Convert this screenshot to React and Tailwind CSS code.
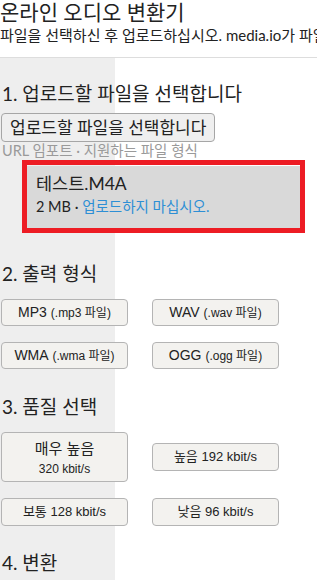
import React from 'react';

const kr = { fontFamily: 'Lato, "Noto Sans CJK KR", sans-serif' };
const arial = { fontFamily: '"Liberation Sans", "Noto Sans CJK KR", sans-serif' };

const FormatButton = ({ label, ext }) => (
  <button
    className="w-[127px] h-[27px] bg-[#f3f2ef] border border-[#b4b4b4] rounded-[4px] text-[14px] text-[#222] flex items-center justify-center"
    style={arial}
  >
    {label}&nbsp;<span className="text-[12px]">{ext}</span>
  </button>
);

const QualityButton = ({ children, tall }) => (
  <button
    className={
      tall
        ? 'w-[127px] h-[50px] bg-[#f3f2ef] border border-[#b4b4b4] rounded-[4px] text-[#222] flex flex-col items-center justify-center'
        : 'w-[127px] h-[28px] bg-[#f3f2ef] border border-[#b4b4b4] rounded-[4px] text-[13px] text-[#222] flex items-center justify-center'
    }
    style={arial}
  >
    {children}
  </button>
);

export default function App() {
  return (
    <div className="w-[317px] h-[580px] overflow-hidden bg-white" style={kr}>
      {/* 헤더 */}
      <div className="h-[58px] border-b border-[#dddddd] text-[#222]">
        <h1 className="text-[21px] leading-[24px] whitespace-nowrap">온라인 오디오 변환기</h1>
        <p className="mt-[2px] text-[15px] leading-[18px] whitespace-nowrap">
          파일을 선택하신 후 업로드하십시오. media.io가 파일을 변환합니다.
        </p>
      </div>

      {/* 본문 - 왼쪽 회색 기둥 */}
      <div className="h-[522px] pl-[1px] bg-[linear-gradient(to_right,#eeeeee_115px,#ffffff_115px)] text-[#222]">
        <h2 className="pt-[24px] pl-[1px] text-[19px] leading-[24px] whitespace-nowrap">1. 업로드할 파일을 선택합니다</h2>
        <button className="mt-[7px] h-[29px] px-[8px] bg-[#efefef] border border-[#a6a6a6] rounded-[4px] text-[17px] leading-[19px] whitespace-nowrap">
          업로드할 파일을 선택합니다
        </button>
        <p className="pl-[1px] text-[14.5px] leading-[18px] text-[#9a9a9a] whitespace-nowrap">URL 임포트 · 지원하는 파일 형식</p>

        <div className="ml-[21px] w-[283px] h-[73px] border-[5px] border-[#ed1c24]">
          <div className="mt-[1px] h-[62px] bg-[#d9d9d9] pl-[9px] pt-[7px]">
            <div className="text-[17.5px] leading-[22px]">테스트.M4A</div>
            <div className="mt-[2px] text-[14.5px] leading-[20px] whitespace-nowrap">
              2 MB · <span className="text-[#2d8fd5]">업로드하지 마십시오.</span>
            </div>
          </div>
        </div>

        <h2 className="mt-[29px] pl-[1px] text-[19px] leading-[24px]">2. 출력 형식</h2>
        <div className="mt-[13px] flex gap-[24px]">
          <FormatButton label="MP3" ext="(.mp3 파일)" />
          <FormatButton label="WAV" ext="(.wav 파일)" />
        </div>
        <div className="mt-[16px] flex gap-[24px]">
          <FormatButton label="WMA" ext="(.wma 파일)" />
          <FormatButton label="OGG" ext="(.ogg 파일)" />
        </div>

        <h2 className="mt-[26px] pl-[1px] text-[19px] leading-[24px]">3. 품질 선택</h2>
        <div className="mt-[13px] flex items-center gap-[24px]">
          <QualityButton tall>
            <span className="text-[15px] leading-[20px]">매우 높음</span>
            <span className="mt-[3px] text-[12px] leading-[14px]">320 kbit/s</span>
          </QualityButton>
          <QualityButton>높음 192 kbit/s</QualityButton>
        </div>
        <div className="mt-[16px] flex gap-[24px]">
          <QualityButton>보통 128 kbit/s</QualityButton>
          <QualityButton>낮음 96 kbit/s</QualityButton>
        </div>

        <h2 className="mt-[25px] pl-[1px] text-[19px] leading-[24px]">4. 변환</h2>
      </div>
    </div>
  );
}
